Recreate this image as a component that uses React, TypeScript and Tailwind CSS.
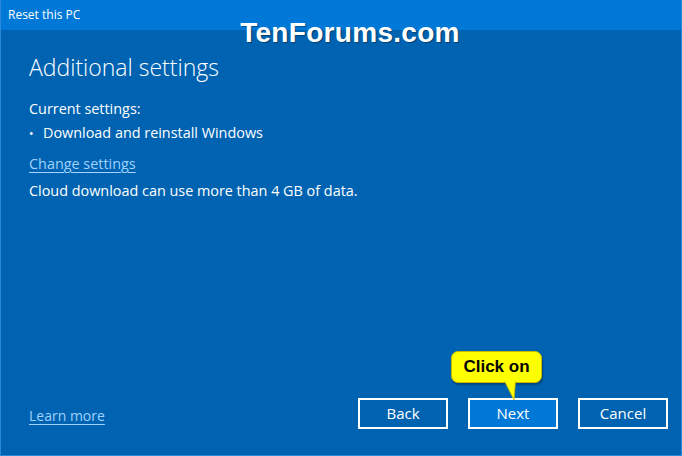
import React from "react";

const font = { fontFamily: '"Segoe UI", "Open Sans", "Noto Sans", sans-serif' };

function Btn({ label, primary }: { label: string; primary?: boolean }) {
  return (
    <button
      className={
        primary
          ? "w-[90px] h-[31px] border-2 border-white bg-[#0078d7] text-white text-[15px] leading-none"
          : "w-[90px] h-[31px] border-2 border-white bg-[#0063b1] text-white text-[15px] leading-none"
      }
    >
      {label}
    </button>
  );
}

export default function App() {
  return (
    <div
      className="relative w-[682px] h-[456px] flex flex-col bg-[#0063b1] border-x border-b border-[#2b88d8] text-white overflow-hidden"
      style={font}
    >
      {/* title bar */}
      <div className="h-[30px] shrink-0 bg-[#0078d7] flex items-center pl-[7px] text-[12px]">
        Reset this PC
      </div>

      {/* site watermark */}
      <div
        className="absolute top-[19px] left-[18px] right-0 text-center text-[28px] font-bold leading-none tracking-[0.3px]"
        style={{ fontFamily: '"Liberation Sans", Arial, sans-serif', textShadow: "1px 1px 1px rgba(0,0,0,0.35)" }}
      >
        TenForums.com
      </div>

      <div className="flex-1 flex flex-col pl-[28px] pr-[13px]">
        <h1 className="mt-[26px] text-[23px] font-light leading-none">Additional settings</h1>

        <div className="mt-[23px] text-[14.4px] leading-none flex flex-col">
          <div>Current settings:</div>
          <div className="mt-[10px] flex items-center">
            <span className="w-[14px] text-[12px]">•</span>
            <span>Download and reinstall Windows</span>
          </div>
          <a className="mt-[16px] text-[#9fd2ff] underline underline-offset-[3px] self-start">Change settings</a>
          <div className="mt-[13px]">Cloud download can use more than 4 GB of data.</div>
        </div>

        <div className="mt-auto mb-[26px] flex items-center">
          <a className="mt-[3px] text-[14px] text-[#9fd2ff] underline underline-offset-[3px]">Learn more</a>
          <div className="ml-auto flex gap-[20px]">
            <Btn label="Back" />
            <div className="relative">
              <Btn label="Next" primary />
              {/* callout */}
              <div className="absolute left-[-17px] bottom-[46px] w-[91px] h-[32px] rounded-[7px] bg-[#ffff00] border border-[#c9b800] flex items-center justify-center text-black text-[17px] font-bold shadow-[1px_2px_2px_rgba(0,0,0,0.3)]"
                style={{ fontFamily: '"Liberation Sans", Arial, sans-serif' }}>
                Click on
              </div>
              <svg className="absolute left-[36px] top-[-17px]" width="16" height="20" viewBox="0 0 16 20">
                <path d="M0.5 0 L11.5 0 L10 19 Z" fill="#ffff00" stroke="#c9b800" strokeWidth="0.8" />
                <path d="M1 0 L11 0" stroke="#ffff00" strokeWidth="2" />
              </svg>
            </div>
            <Btn label="Cancel" />
          </div>
        </div>
      </div>
    </div>
  );
}
